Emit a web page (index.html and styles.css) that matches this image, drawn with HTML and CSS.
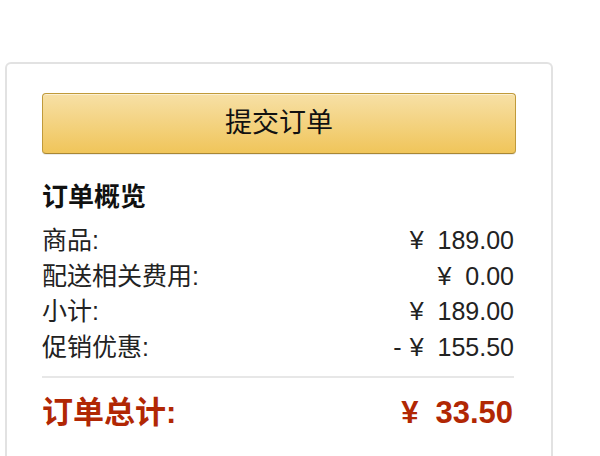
FILE: index.html
```html
<!DOCTYPE html>
<html lang="zh-CN">
<head>
<meta charset="utf-8">
<title>订单</title>
<link rel="stylesheet" href="styles.css">
</head>
<body>
<div class="card">
  <button class="submit" type="button">提交订单</button>
  <h3 class="title">订单概览</h3>
  <div class="rows">
    <div class="row"><span>商品:</span><span class="amt"><span class="cur">¥</span>189.00</span></div>
    <div class="row"><span>配送相关费用:</span><span class="amt"><span class="cur">¥</span>0.00</span></div>
    <div class="row"><span>小计:</span><span class="amt"><span class="cur">¥</span>189.00</span></div>
    <div class="row"><span>促销优惠:</span><span class="amt"><span class="neg">-</span><span class="cur">¥</span>155.50</span></div>
  </div>
  <div class="divider"></div>
  <div class="total"><span>订单总计:</span><span class="amt"><span class="cur">¥</span>33.50</span></div>
</div>
</body>
</html>
```
FILE: styles.css
```css
html, body {
  margin: 0;
  padding: 0;
  background: #fff;
}
body {
  font-family: "Liberation Sans", "Noto Sans CJK SC", sans-serif;
  color: #222;
}
.card {
  box-sizing: border-box;
  width: 548px;
  height: 394px;
  margin: 62px 0 0 5px;
  padding: 29px 35px 0 35px;
  border: 2px solid #e2e2e2;
  border-bottom: 0;
  border-radius: 6px 6px 0 0;
}
.submit {
  display: block;
  box-sizing: border-box;
  width: 100%;
  height: 61px;
  margin: 0;
  padding: 0;
  border: 1px solid #c09a3a;
  border-bottom-color: #a88734;
  border-radius: 4px;
  background: linear-gradient(to bottom, #f7e0a6 0%, #f0c55a 100%);
  box-shadow: inset 0 1px 0 rgba(255,255,255,0.5), 0 1px 0 rgba(0,0,0,0.08);
  font-family: "Liberation Sans", "Noto Sans CJK SC", sans-serif;
  font-size: 27px;
  color: #111;
  line-height: 59px;
}
.title {
  margin: 26px 0 8px;
  font-size: 26px;
  font-weight: bold;
  line-height: 35px;
  color: #111;
}
.rows {
  display: flex;
  flex-direction: column;
}
.row, .total {
  display: flex;
  justify-content: space-between;
  align-items: center;
}
.row {
  font-size: 25px;
  line-height: 35.5px;
  padding-right: 2px;
}
.cur {
  padding-right: 14px;
}
.neg {
  padding-right: 8px;
}
.divider {
  height: 2px;
  margin: 11px 2px 0 0;
  background: #e7e7e7;
}
.total {
  margin-top: 15px;
  font-size: 31px;
  font-weight: bold;
  line-height: 40px;
  color: #b12704;
  padding-right: 3px;
}
.total .cur {
  padding-right: 17px;
}
```
